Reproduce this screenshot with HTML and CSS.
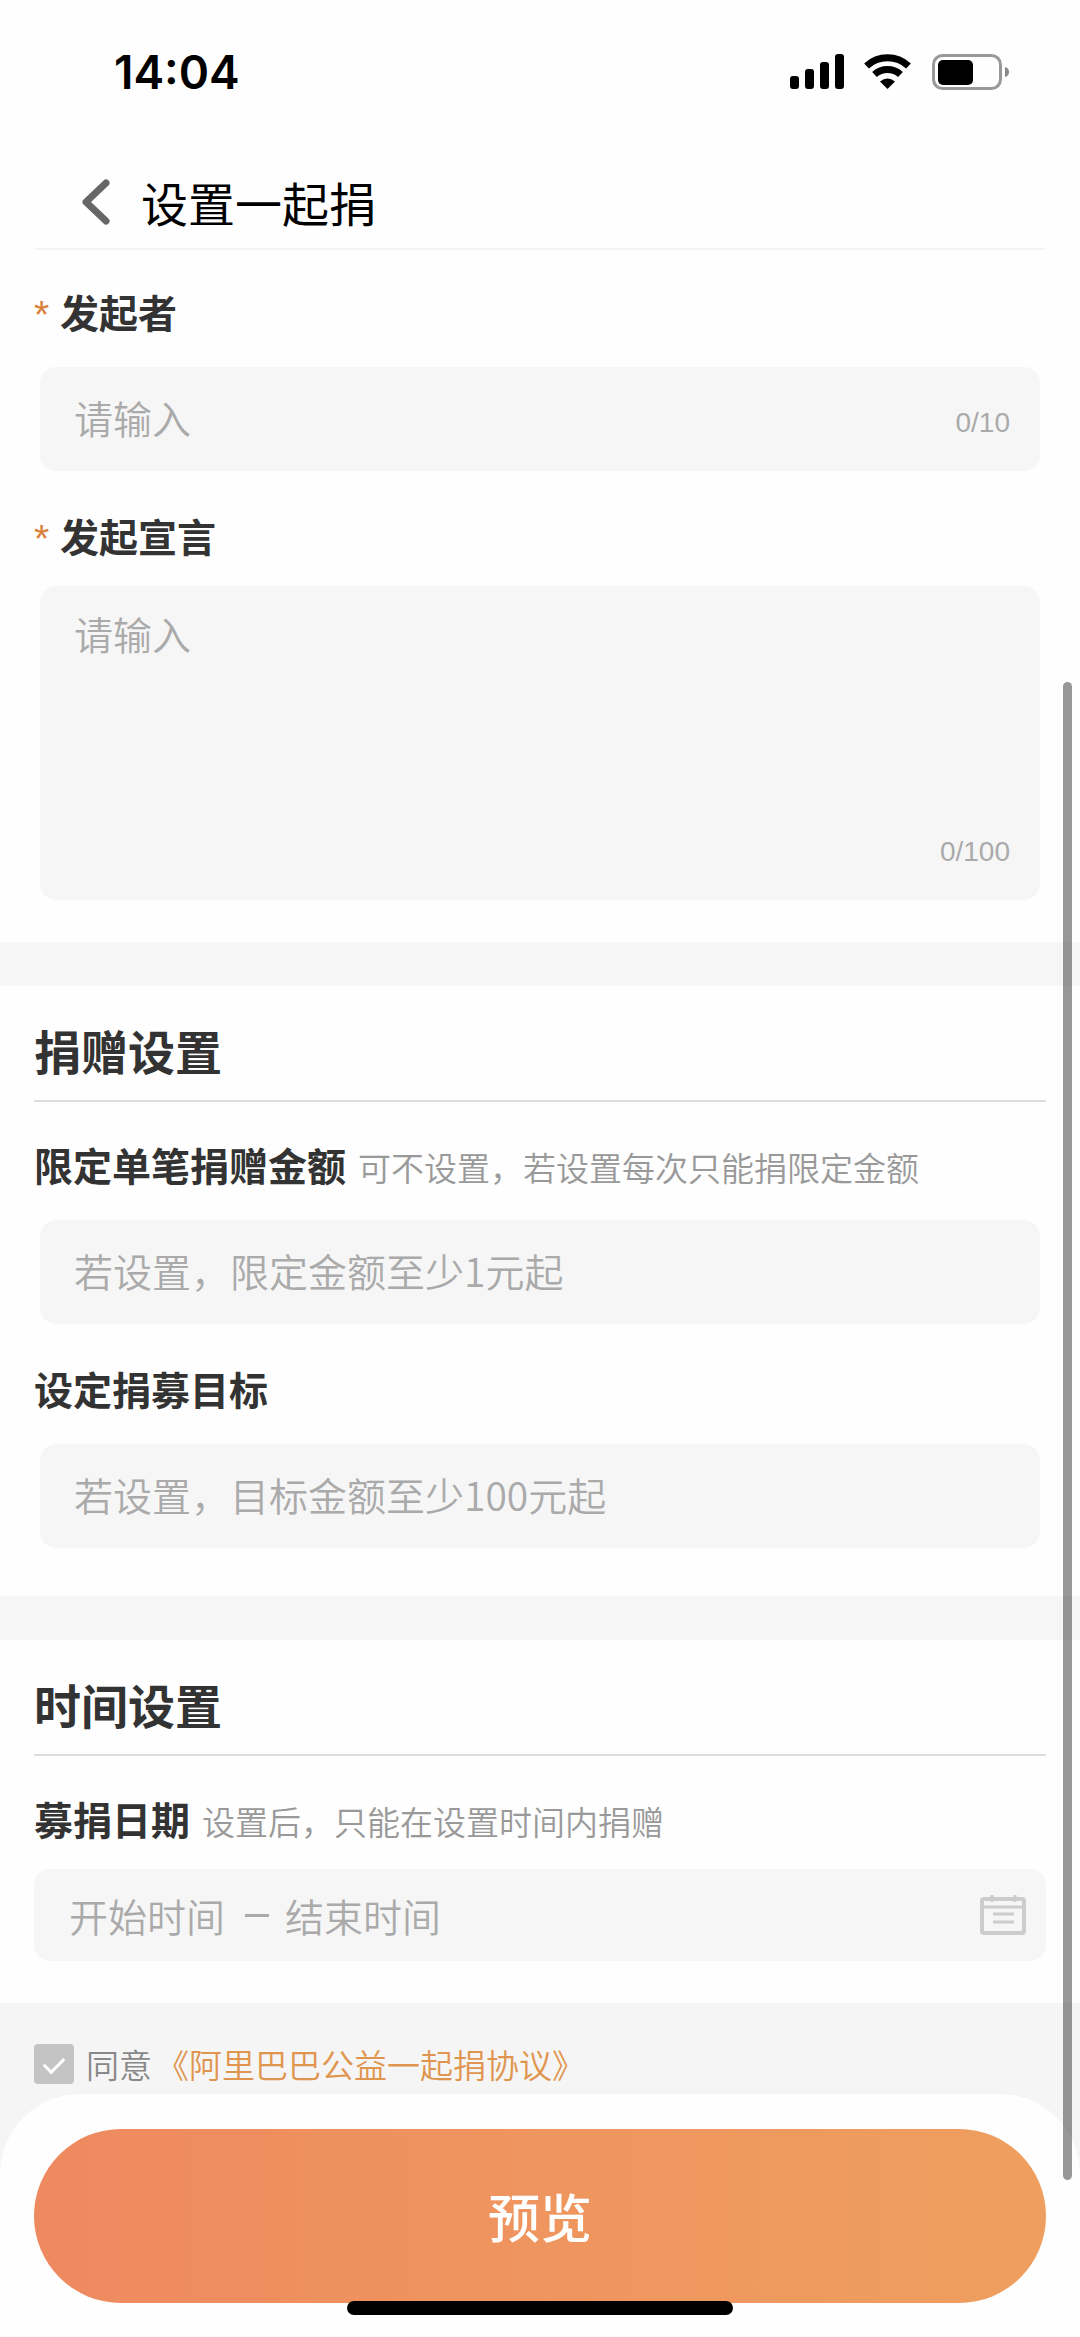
FILE: index.html
```html
<!DOCTYPE html>
<html lang="zh-CN">
<head>
    <meta charset="UTF-8">
    <meta name="viewport" content="width=device-width, initial-scale=1.0">
    <title>设置一起捐</title>
    <link rel="stylesheet" href="styles.css">
</head>
<body>
    <div class="status-bar">
        <span class="clock">14:04</span>
        <div class="status-icons">
            <svg class="signal" width="54" height="36" viewBox="0 0 54 36">
                <rect x="0" y="22" width="9" height="13" rx="3"/>
                <rect x="15" y="15" width="9" height="20" rx="3"/>
                <rect x="30" y="8" width="9" height="27" rx="3"/>
                <rect x="45" y="0" width="9" height="35" rx="3"/>
            </svg>
            <svg class="wifi" width="48" height="36" viewBox="0 0 48 36">
                <path d="M2.500 12A31 31 0 0 1 44.500 12M10.500 20.500A19.500 19.500 0 0 1 36.500 20.500" fill="none" stroke="#000" stroke-width="7"/>
                <path d="M16 27.500Q23.500 21.500 31 27.500L23.500 35Z"/>
            </svg>
            <svg class="battery" width="77" height="36" viewBox="0 0 77 36">
                <rect x="1.500" y="1.500" width="67" height="33" rx="9" fill="none" stroke="#999" stroke-width="3"/>
                <rect x="6" y="6" width="35" height="25" rx="5"/>
                <path d="M73 13Q77 14 77 18Q77 22 73 23Z" fill="#888"/>
            </svg>
        </div>
    </div>

    <header class="nav">
        <button class="back-btn" type="button" aria-label="返回">
            <svg width="28" height="46" viewBox="0 0 28 46">
                <path d="M24 4L4 23L24 42" fill="none" stroke="#666" stroke-width="7" stroke-linecap="round" stroke-linejoin="round"/>
            </svg>
        </button>
        <h1>设置一起捐</h1>
    </header>

    <form>
        <section class="card">
            <div class="field">
                <div class="field-head">
                    <span class="required">*</span>
                    <label for="founder">发起者</label>
                </div>
                <div class="input-box">
                    <input type="text" id="founder" placeholder="请输入" maxlength="10">
                    <span class="count">0/10</span>
                </div>
            </div>
            <div class="field">
                <div class="field-head tight">
                    <span class="required">*</span>
                    <label for="slogan">发起宣言</label>
                </div>
                <div class="input-box area-box">
                    <textarea id="slogan" placeholder="请输入" maxlength="100"></textarea>
                    <span class="count">0/100</span>
                </div>
            </div>
        </section>

        <section class="card">
            <h2>捐赠设置</h2>
            <div class="field">
                <div class="field-head">
                    <label for="amount">限定单笔捐赠金额</label>
                    <span class="hint">可不设置，若设置每次只能捐限定金额</span>
                </div>
                <div class="input-box">
                    <input type="text" id="amount" placeholder="若设置，限定金额至少1元起">
                </div>
            </div>
            <div class="field">
                <div class="field-head">
                    <label for="goal">设定捐募目标</label>
                </div>
                <div class="input-box">
                    <input type="text" id="goal" placeholder="若设置，目标金额至少100元起">
                </div>
            </div>
        </section>

        <section class="card">
            <h2>时间设置</h2>
            <div class="field">
                <div class="field-head tight">
                    <label for="start-date">募捐日期</label>
                    <span class="hint">设置后，只能在设置时间内捐赠</span>
                </div>
                <div class="date-box">
                    <input type="text" id="start-date" placeholder="开始时间">
                    <span class="dash"></span>
                    <input type="text" id="end-date" placeholder="结束时间" aria-label="结束时间">
                    <button class="calendar-btn" type="button" aria-label="选择日期">
                        <svg width="46" height="42" viewBox="0 0 46 42" fill="none" stroke="#ccc">
                            <rect x="2" y="5" width="42" height="34" rx="2" stroke-width="4"/>
                            <path d="M2 13H44M12 1V8M35 1V8" stroke-width="3"/>
                            <path d="M13 20H34M13 28H34" stroke-width="3"/>
                        </svg>
                    </button>
                </div>
            </div>
        </section>

        <footer class="footer">
            <div class="agreement">
                <input type="checkbox" id="agree" checked>
                <label for="agree">同意</label>
                <a href="#">《阿里巴巴公益一起捐协议》</a>
            </div>
            <div class="sheet">
                <button class="preview-btn" type="submit">预览</button>
            </div>
        </footer>
    </form>

    <div class="scroll-thumb"></div>
    <div class="home-bar"></div>
</body>
</html>
```
FILE: styles.css
```css
* {
    margin: 0;
    padding: 0;
    box-sizing: border-box;
}

body {
    position: relative;
    min-height: 100vh;
    background: #fefefe;
    color: #333;
    font-family: "Noto Sans CJK SC", sans-serif;
    font-size: 39px;
}

button {
    border: none;
    background: none;
    cursor: pointer;
}

svg {
    display: block;
}

/* Phone status bar */
.status-bar {
    display: flex;
    align-items: center;
    justify-content: space-between;
    padding: 48px 71px 44px 114px;
}

.clock {
    font-family: Inter, sans-serif;
    font-size: 46px;
    font-weight: 600;
    line-height: 48px;
    color: #000;
}

.status-icons {
    display: flex;
    align-items: center;
    gap: 20px;
}

/* Title bar */
.nav {
    display: flex;
    align-items: center;
    gap: 31px;
    margin: 0 36px;
    padding: 30px 46px 14px;
    border-bottom: 2px solid #f3f3f3;
}

h1 {
    font-size: 47px;
    font-weight: 400;
    line-height: 64px;
    color: #000;
}

/* Form sections */
.card {
    padding: 33px 34px 42px;
}

.card + .card {
    padding: 32px 34px 48px;
    border-top: 44px solid #f6f6f6;
}

.card:last-of-type {
    padding-bottom: 42px;
}

h2 {
    margin-bottom: 34px;
    padding-bottom: 18px;
    border-bottom: 2px solid #ddd;
    font-size: 47px;
    font-weight: 700;
    line-height: 64px;
}

.field + .field {
    margin-top: 36px;
}

.field-head {
    display: flex;
    align-items: baseline;
    gap: 12px;
    margin-bottom: 28px;
    line-height: 56px;
}

.field-head.tight {
    margin-bottom: 23px;
}

.field-head label {
    font-weight: 700;
}

.required {
    align-self: flex-end;
    width: 14px;
    font-family: "Liberation Sans", sans-serif;
    line-height: 48px;
    color: #d9823b;
}

.hint {
    font-size: 33px;
    font-weight: 350;
    line-height: 40px;
    color: #999;
}

.input-box {
    display: flex;
    align-items: center;
    margin: 0 6px;
    padding: 22px 30px 22px 34px;
    border-radius: 16px;
    background: #f6f6f6;
}

input[type="text"],
textarea {
    flex: 1;
    min-width: 0;
    height: 60px;
    border: none;
    outline: none;
    background: none;
    color: #333;
    font: inherit;
    font-weight: 350;
    line-height: 50px;
}

.input-box input {
    padding-bottom: 4px;
}

::placeholder {
    color: #aaa;
    opacity: 1;
}

.area-box {
    align-items: flex-end;
}

.area-box textarea {
    height: 270px;
    resize: none;
}

.count {
    padding-top: 8px;
    font-family: "Liberation Sans", sans-serif;
    font-size: 28px;
    line-height: 52px;
    color: #aaa;
}

.date-box {
    display: flex;
    align-items: center;
    gap: 16px;
    padding: 16px 20px 16px 35px;
    border-radius: 16px;
    background: #f6f6f6;
}

.date-box input {
    flex: 0 0 160px;
}

.dash {
    width: 24px;
    height: 3px;
    background: #aaa;
}

.calendar-btn {
    margin-left: auto;
}

/* Agreement and bottom sheet */
.footer {
    background: #f5f5f5;
}

.agreement {
    display: flex;
    align-items: center;
    gap: 4px;
    padding: 41px 34px 10px;
    font-size: 33px;
    font-weight: 350;
    line-height: 40px;
    color: #888;
}

.agreement input {
    display: flex;
    justify-content: center;
    width: 40px;
    height: 40px;
    margin-right: 8px;
    border-radius: 4px;
    background: #c4c4c4;
    appearance: none;
}

.agreement input:checked::after {
    content: '';
    width: 9px;
    height: 17px;
    margin-top: 9px;
    border: solid #fff;
    border-width: 0 3px 3px 0;
    transform: rotate(45deg);
}

.agreement a {
    color: #e0954f;
    text-decoration: none;
}

.sheet {
    padding: 35px 34px 34px;
    border-radius: 80px 80px 0 0;
    background: #fefefe;
}

.preview-btn {
    display: block;
    width: 100%;
    padding: 48px;
    border-radius: 87px;
    background: linear-gradient(90deg, #ee8960, #ef955f 50%, #ee9f5f);
    color: #fff;
    font-family: inherit;
    font-size: 52px;
    font-weight: 500;
    line-height: 78px;
}

/* Overlays */
.scroll-thumb {
    position: absolute;
    top: 682px;
    right: 8px;
    bottom: 157px;
    width: 9px;
    border-radius: 5px;
    background: rgba(0, 0, 0, 0.4);
}

.home-bar {
    position: absolute;
    bottom: 22px;
    left: 50%;
    width: 386px;
    height: 14px;
    border-radius: 7px;
    background: #000;
    transform: translateX(-50%);
}
```
